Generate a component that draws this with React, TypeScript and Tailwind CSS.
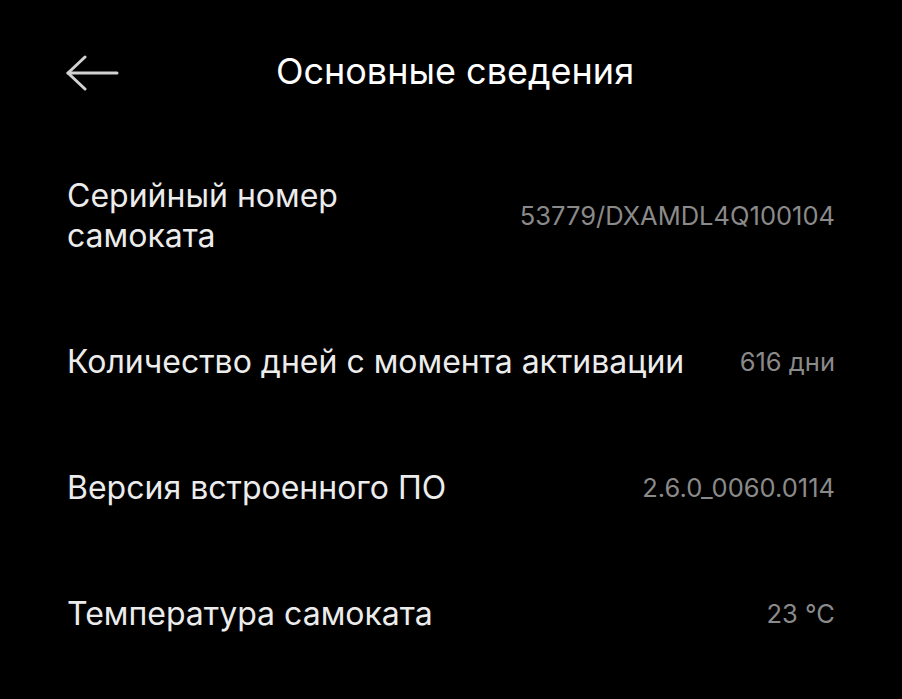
import React from "react";

const rows: { label: string; value: string }[] = [
  { label: "Серийный номер самоката", value: "53779/DXAMDL4Q100104" },
  { label: "Количество дней с момента активации", value: "616 дни" },
  { label: "Версия встроенного ПО", value: "2.6.0_0060.0114" },
  { label: "Температура самоката", value: "23 °C" },
];

export default function App() {
  return (
    <div
      className="w-[902px] h-[699px] bg-black text-white overflow-hidden"
      style={{ fontFamily: "Inter, Roboto, 'Noto Sans', sans-serif" }}
    >
      <div className="h-[133px] pt-[46px] px-[67px]">
        <div className="relative flex h-[50px] items-center justify-center">
          <svg
            className="absolute left-[-1px] top-[calc(50%+2px)] -translate-y-1/2"
            width="53"
            height="36"
            viewBox="0 0 53 36"
            fill="none"
            stroke="#d2d2d2"
            strokeWidth="3"
            strokeLinecap="round"
            strokeLinejoin="round"
          >
            <path d="M51 18H2" />
            <path d="M19 2L2 18L19 34" />
          </svg>
          <span className="pl-[8px] text-[36px] leading-[50px] text-white">Основные сведения</span>
        </div>
      </div>
      <div className="px-[67px]">
        <div className="flex items-center justify-between py-[43px]">
          <div className="w-[300px] text-[32px] leading-[40px] text-[#ececec]">
            Серийный номер самоката
          </div>
          <div className="text-[25.5px] leading-[40px] text-[#8a8a8a]">53779/DXAMDL4Q100104</div>
        </div>
        {rows.slice(1).map((r) => (
          <div key={r.label} className="flex items-center justify-between py-[43px]">
            <div className="text-[32px] leading-[40px] text-[#ececec]">{r.label}</div>
            <div className="text-[25.5px] leading-[40px] text-[#8a8a8a]">{r.value}</div>
          </div>
        ))}
      </div>
    </div>
  );
}
